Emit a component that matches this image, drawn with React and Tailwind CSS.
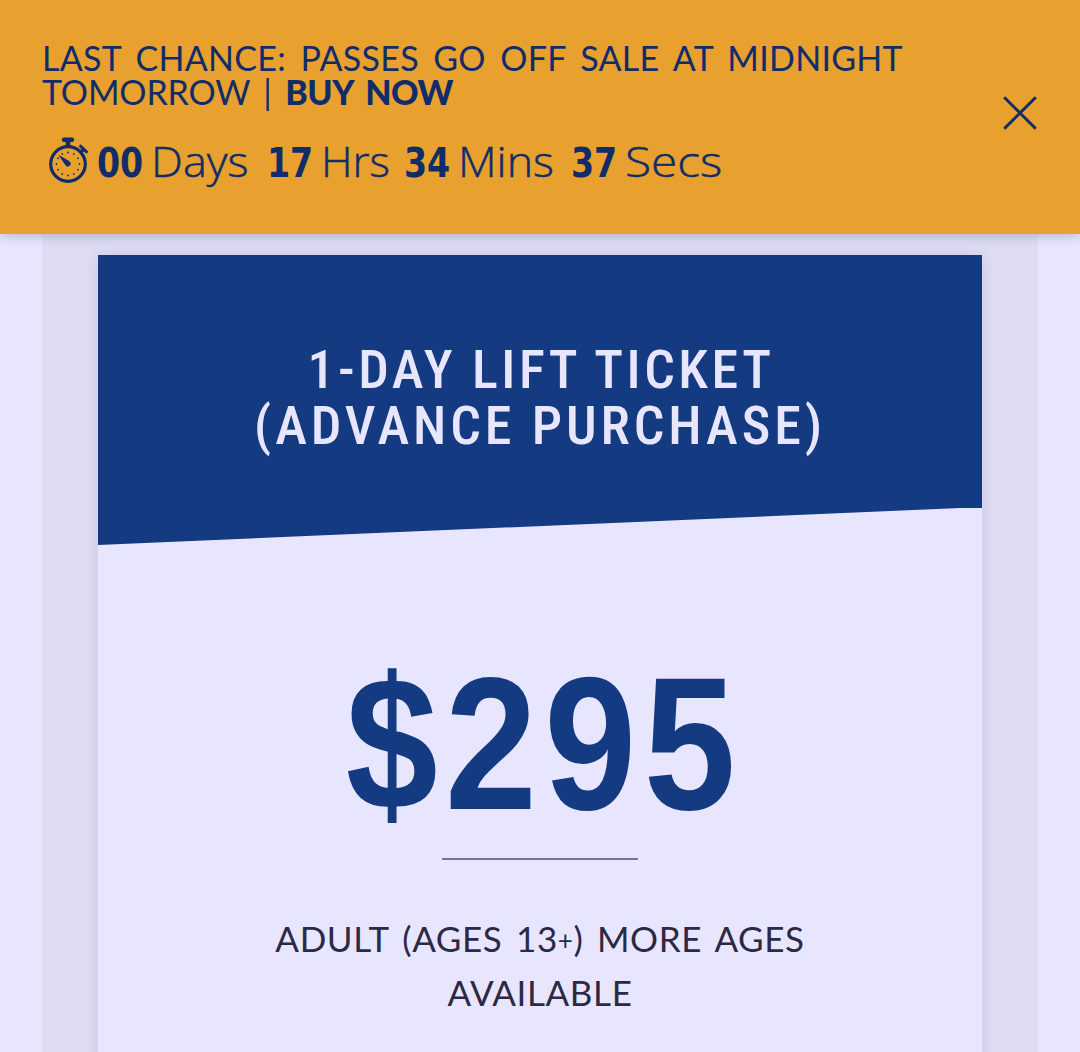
import React from 'react';

const COUNTDOWN = [
  { value: '00', label: 'Days', width: 'w-[170px]', scale: 'scale-x-[1.05]' },
  { value: '17', label: 'Hrs', width: 'w-[137px]', scale: 'scale-x-[1.02]' },
  { value: '34', label: 'Mins', width: 'w-[167px]', scale: 'scale-x-[1.04]' },
  { value: '37', label: 'Secs', width: 'w-[160px]', scale: 'scale-x-[1.11]' }
];

const TICKS = [0, 30, 60, 90, 120, 150, 180, 210, 240, 270, 300, 330];

const Stopwatch = () => (
  <svg width="42" height="48" viewBox="0 0 42 48" fill="none" stroke="#112d69">
    <circle cx="20" cy="27" r="17.3" strokeWidth="3.2" />
    <path d="M16 2.8h8" strokeWidth="4.4" strokeLinecap="round" />
    <path d="M20 3v7" strokeWidth="4.6" />
    <path d="M32.5 9.2l6 5.6" strokeWidth="3" strokeLinecap="round" />
    <path d="M35.6 12l-3.6 4" strokeWidth="3.4" />
    {TICKS.map((angle) => (
      <circle
        key={angle}
        cx="20"
        cy="15.5"
        r="0.9"
        fill="#112d69"
        stroke="none"
        transform={`rotate(${angle} 20 27)`}
      />
    ))}
    <path
      d="M11.2 18.6L18 28.4a2.5 2.5 0 0 0 3.6-3.6z"
      fill="#112d69"
      strokeWidth="0.8"
      strokeLinejoin="round"
    />
  </svg>
);

const PromoBanner = () => (
  <header className="relative z-10 flex h-[234px] bg-[#e8a02f] pl-[42px] pr-[43px] pt-[41px] text-[#112d69] shadow-[0_3px_10px_rgba(40,35,80,0.22)]">
    <div className="flex-1">
      <p className="font-['Lato',sans-serif] text-[34px] leading-[34px]">
        <span className="block tracking-[0.3px] [word-spacing:5.3px]">
          LAST CHANCE: PASSES GO OFF SALE AT MIDNIGHT
        </span>
        <span className="block -tracking-[0.15px] [word-spacing:5px]">
          TOMORROW | <b className="font-black -tracking-[0.5px]">BUY NOW</b>
        </span>
      </p>
      <div className="mt-[28px] flex h-12">
        <div className="w-[55px] pl-1.5">
          <Stopwatch />
        </div>
        {COUNTDOWN.map((item) => (
          <div key={item.label} className={`flex shrink-0 items-baseline leading-[48px] ${item.width}`}>
            <span className="w-[54px] origin-left scale-x-[0.9] font-['DejaVu_Sans_Condensed','DejaVu_Sans',sans-serif] text-[41px] font-bold">
              {item.value}
            </span>
            <span className={`origin-left font-['Open_Sans',sans-serif] text-[43px] font-light [-webkit-text-stroke:0.5px_#112d69] ${item.scale}`}>
              {item.label}
            </span>
          </div>
        ))}
      </div>
    </div>
    <button className="mt-[55px] h-[34px] w-[34px]" aria-label="Close">
      <svg width="34" height="34" viewBox="0 0 34 34" stroke="#112d69" strokeWidth="3">
        <path d="M1.2 1.2l31.6 31.6M32.8 1.2L1.2 32.8" />
      </svg>
    </button>
  </header>
);

const TicketCard = () => (
  <article className="h-[820px] w-[884px] bg-[#e8e6ff] text-center shadow-[0_0_14px_rgba(40,35,80,0.11)]">
    <div className="h-[290px] bg-[#143b81] pt-[87px] [clip-path:polygon(0_0,100%_0,100%_253px,862px_253px,0_290px)]">
      <h2 className="font-['Roboto',sans-serif] text-[54px] font-medium leading-[56px] text-[#e8e6ff] [font-stretch:75%]">
        <span className="block pl-0.5 tracking-[3.5px]">1-DAY LIFT TICKET</span>
        <span className="block tracking-[3.9px]">(ADVANCE PURCHASE)</span>
      </h2>
    </div>
    <p className="mt-[108px] scale-x-[0.87] pl-2.5 font-['Liberation_Sans',sans-serif] text-[190px] font-bold leading-[180px] tracking-[8.5px] text-[#143b81]">
      $295
    </p>
    <hr className="mx-auto mt-[25px] h-0.5 w-[196px] border-0 bg-[#77748f]" />
    <p className="mt-[51px] font-['Lato',sans-serif] text-[35px] leading-[54px] text-[#2b2944]">
      <span className="block tracking-[0.6px] [word-spacing:4px]">
        ADULT (AGES 13<span className="relative -top-0.5 text-[26px] leading-none">+</span>) MORE AGES
      </span>
      <span className="block tracking-[0.6px]">AVAILABLE</span>
    </p>
  </article>
);

const App = () => (
  <div className="h-[1052px] w-[1080px] overflow-hidden bg-[#e8e6ff]">
    <PromoBanner />
    <main className="mx-[42px] flex h-[818px] justify-center bg-[#dfddf4] pt-[21px]">
      <TicketCard />
    </main>
  </div>
);

export default App;
